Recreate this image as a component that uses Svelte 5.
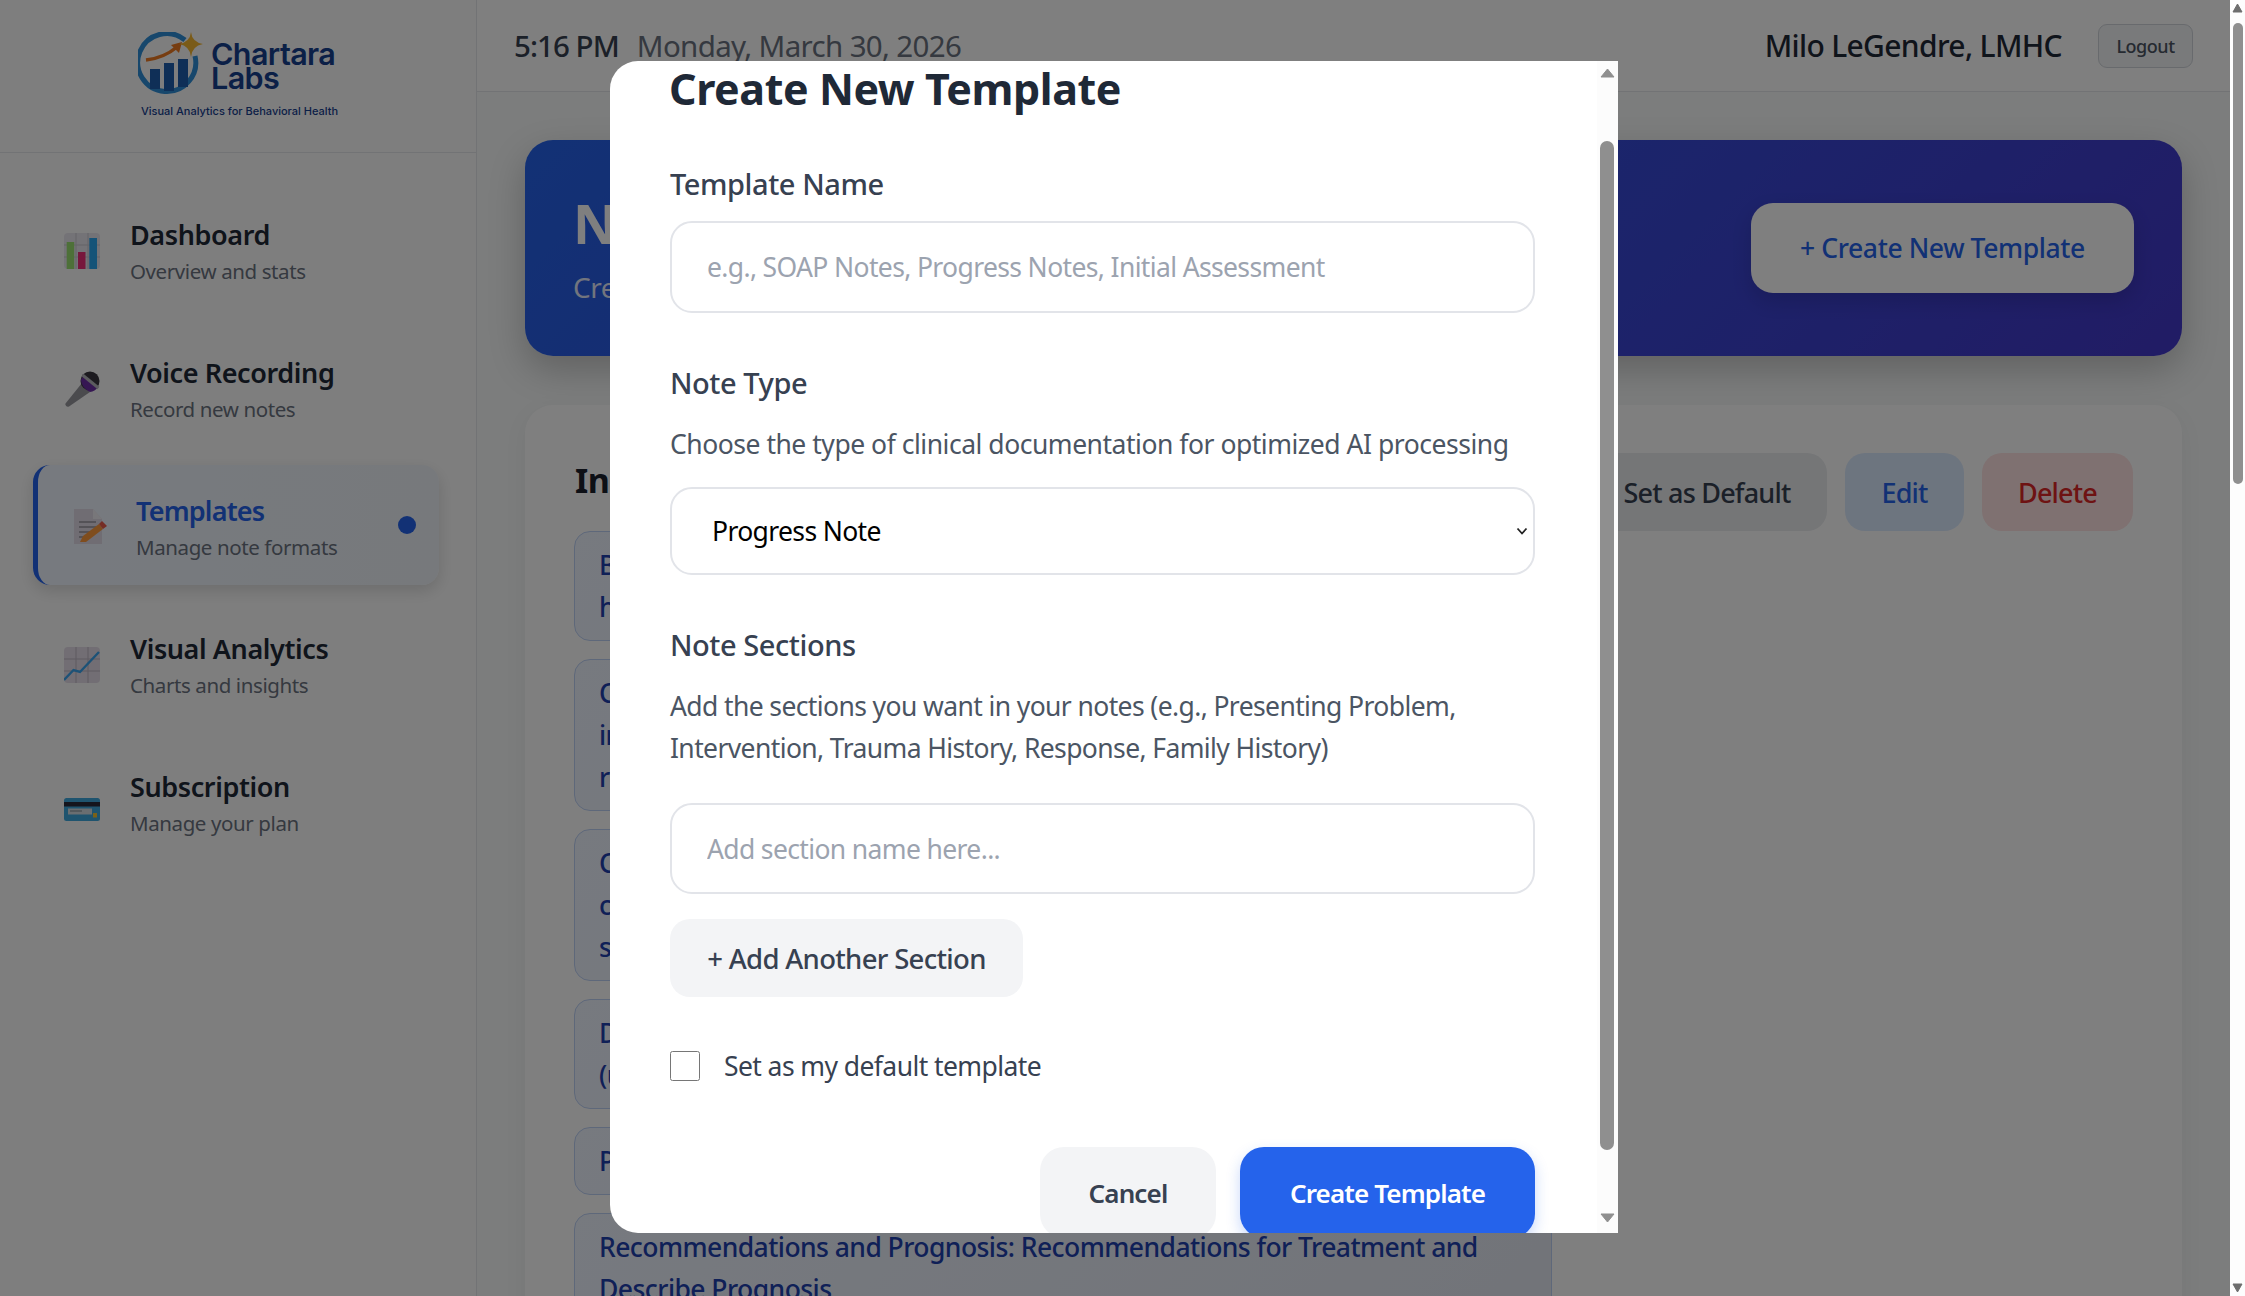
<script>
	const navItems = [
		{ id: 'dashboard', title: 'Dashboard', sub: 'Overview and stats' },
		{ id: 'voice', title: 'Voice Recording', sub: 'Record new notes' },
		{ id: 'templates', title: 'Templates', sub: 'Manage note formats', active: true },
		{ id: 'analytics', title: 'Visual Analytics', sub: 'Charts and insights' },
		{ id: 'subscription', title: 'Subscription', sub: 'Manage your plan' }
	];

	const sections = [
		['Brief summary of session', 'highlights and presenting concerns'],
		['Clinical observations and', 'interventions used during the', 'recent session with the client'],
		['Client response to treatment and', 'current progress on goals and', 'symptoms reported this week'],
		['Diagnosis and treatment plan', '(updated as clinically indicated)'],
		['Plan for next session'],
		['Recommendations and Prognosis: Recommendations for Treatment and', 'Describe Prognosis']
	];
</script>

<div class="page">
	<div class="app">
		<aside class="sidebar">
			<div class="brand">
				<div class="logo">
					<svg class="logo-mark" viewBox="0 0 72 66" width="72" height="66">
						<path d="M47 8 A29 29 0 1 0 57 24" fill="none" stroke="#2f8fd8" stroke-width="5" />
						<rect x="12" y="37" width="10" height="20" fill="#1f5fae" />
						<rect x="26" y="31" width="10" height="28" fill="#1f5fae" />
						<rect x="40" y="27" width="10" height="28" fill="#1f5fae" />
						<path d="M8 28 Q26 26 39 15" fill="none" stroke="#ef7a22" stroke-width="3.5" />
						<path d="M33 13 L44 10 L41 21 Z" fill="#ef7a22" />
						<path d="M53 0 Q54 10 65 12 Q54 14 53 25 Q52 14 41 12 Q52 10 53 0 Z" fill="#f5b731" />
					</svg>
					<div class="logo-name">Chartara<br />Labs</div>
				</div>
				<div class="logo-tag">Visual Analytics for Behavioral Health</div>
			</div>
			<nav class="nav">
				{#each navItems as item}
					<div class="nav-item" class:active={item.active}>
						<span class="nav-icon">
							{#if item.id === 'dashboard'}
								<svg viewBox="0 0 36 36" width="36" height="36">
									<rect width="36" height="36" rx="4" fill="#e9e6ee" />
									<path d="M12 0V36M24 0V36M0 12H36M0 24H36" stroke="#c9c8d0" stroke-width="1" />
									<rect x="2.7" y="9" width="7.5" height="27" fill="#9be070" />
									<rect x="14" y="19" width="7.5" height="17" fill="#ee2f78" />
									<rect x="25.3" y="5" width="7.7" height="31" fill="#2aa6f0" />
								</svg>
							{:else if item.id === 'voice'}
								<svg viewBox="0 0 36 36" width="36" height="36">
									<path d="M1.5 32.5 L18 12 L26 21 L5 35.5 Q1 36.5 1.5 32.5 Z" fill="#96969c" />
									<circle cx="26" cy="10" r="9.5" fill="#3a3640" />
									<path d="M16.8 9 Q18 17 26 21 Q31 20.5 34 16 L20 4 Z" fill="#6c2fa6" />
									<path d="M18.5 4 L34.5 17" stroke="#b8b8be" stroke-width="3" />
								</svg>
							{:else if item.id === 'templates'}
								<svg class="doc" viewBox="0 0 36 36" width="36" height="36">
									<path d="M2 0H21L30 10V35H2Z" fill="#e0dbe6" />
									<path d="M21 0L30 10H21Z" fill="#f1eef4" />
									<path d="M7 13H24M7 18H24M7 23H20M7 28H14" stroke="#97949c" stroke-width="1.5" />
									<path d="M8 33 L11 27 L27 15 L31 20 L14 33 Z" fill="#ff9a3c" />
									<path d="M27 15 L30 12 L35 17 L31 20 Z" fill="#ea5a4a" />
								</svg>
							{:else if item.id === 'analytics'}
								<svg viewBox="0 0 36 36" width="36" height="36">
									<rect width="36" height="36" rx="4" fill="#e4dde8" />
									<path d="M12 0V36M24 0V36M0 12H36M0 24H36" stroke="#bcb4c2" stroke-width="1" />
									<polyline points="0,33 9.5,23 16,25 35,5" fill="none" stroke="#3aa4ef" stroke-width="2.4" />
								</svg>
							{:else}
								<svg class="card-icon" viewBox="0 0 36 23" width="36" height="23">
									<rect width="36" height="23" rx="2.5" fill="#3fa9df" />
									<rect y="4" width="36" height="4.5" fill="#2b2b3a" />
									<rect x="4" y="10.5" width="24" height="6" fill="#d4dde2" />
									<path d="M6 13H18" stroke="#97a0a6" stroke-width="1.4" />
									<rect x="29" y="15" width="4" height="4.5" fill="#f3c232" />
								</svg>
							{/if}
						</span>
						<span class="nav-text">
							<span class="nav-title">{item.title}</span>
							<span class="nav-sub">{item.sub}</span>
						</span>
						{#if item.active}<span class="nav-dot"></span>{/if}
					</div>
				{/each}
			</nav>
		</aside>

		<div class="main">
			<header class="topbar">
				<div class="clock">
					<span class="time">5:16 PM</span>
					<span class="date">Monday, March 30, 2026</span>
				</div>
				<div class="user">
					<span class="user-name">Milo LeGendre, LMHC</span>
					<button class="logout" type="button">Logout</button>
				</div>
			</header>

			<div class="content">
				<section class="banner">
					<div>
						<h1>Note Templates</h1>
						<p>Create and manage your note formats</p>
					</div>
					<button class="banner-btn" type="button">+ Create New Template</button>
				</section>

				<section class="card">
					<div class="card-head">
						<h2>Individual Therapy Progress Note</h2>
						<div class="card-actions">
							<button class="act act-default" type="button">Set as Default</button>
							<button class="act act-edit" type="button">Edit</button>
							<button class="act act-delete" type="button">Delete</button>
						</div>
					</div>
					<div class="chips">
						{#each sections as lines}
							<div class="chip">
								{#each lines as line}<div>{line}</div>{/each}
							</div>
						{/each}
					</div>
				</section>
			</div>
		</div>

		<div class="overlay">
			<div class="modal">
				<div class="modal-body">
					<h2 class="modal-title">Create New Template</h2>

					<div class="label first">Template Name</div>
					<input class="field" type="text" placeholder="e.g., SOAP Notes, Progress Notes, Initial Assessment" />

					<div class="label">Note Type</div>
					<p class="help">Choose the type of clinical documentation for optimized AI processing</p>
					<div class="select-wrap">
						<select class="field select">
							<option>Progress Note</option>
						</select>
						<svg class="chevron" viewBox="0 0 12 8" width="12" height="8">
							<polyline points="1.5,1.5 6,6.5 10.5,1.5" fill="none" stroke="#222" stroke-width="1.8" />
						</svg>
					</div>

					<div class="label">Note Sections</div>
					<p class="help help-sections">
						Add the sections you want in your notes (e.g., Presenting Problem,<br />
						Intervention, Trauma History, Response, Family History)
					</p>
					<input class="field field-section" type="text" placeholder="Add section name here..." />
					<button class="add-btn" type="button">+ Add Another Section</button>

					<label class="check">
						<input type="checkbox" />
						<span>Set as my default template</span>
					</label>

					<div class="modal-actions">
						<button class="cancel" type="button">Cancel</button>
						<button class="create" type="button">Create Template</button>
					</div>
				</div>
				<div class="modal-scroll">
					<svg class="arrow" viewBox="0 0 15 10" width="15" height="10"><path d="M7.5 1 L14 9 H1 Z" fill="#8f8f8f" stroke="#8f8f8f" stroke-linejoin="round" /></svg>
					<div class="modal-track"><div class="modal-thumb"></div></div>
					<svg class="arrow" viewBox="0 0 15 10" width="15" height="10"><path d="M7.5 9 L14 1 H1 Z" fill="#8f8f8f" stroke="#8f8f8f" stroke-linejoin="round" /></svg>
				</div>
			</div>
		</div>
	</div>

	<div class="page-scroll">
		<svg viewBox="0 0 11 10" width="11" height="10"><path d="M5.5 1 L10 9 H1 Z" fill="#6e6e6e" stroke="#6e6e6e" stroke-linejoin="round" /></svg>
		<div class="page-track"><div class="page-thumb"></div></div>
		<svg viewBox="0 0 11 10" width="11" height="10"><path d="M5.5 9 L10 1 H1 Z" fill="#6e6e6e" stroke="#6e6e6e" stroke-linejoin="round" /></svg>
	</div>
</div>

<style>
	:global(body) {
		margin: 0;
		background: #fff;
	}

	.page {
		display: flex;
		height: 1296px;
		overflow: hidden;
		font-family: 'Noto Sans', 'Open Sans', sans-serif;
		letter-spacing: -0.03em;
		color: #1f2937;
	}

	.app {
		position: relative;
		flex: 1;
		display: flex;
		min-width: 0;
	}

	/* sidebar */
	.sidebar {
		width: 477px;
		flex-shrink: 0;
		box-sizing: border-box;
		background: #fdfdfd;
		border-right: 1px solid #e5e7eb;
	}

	.brand {
		height: 153px;
		box-sizing: border-box;
		padding: 32px 0 0 138px;
		border-bottom: 1px solid #e5e7eb;
	}

	.logo {
		display: flex;
		align-items: flex-start;
		gap: 1px;
		height: 66px;
	}

	.logo-mark {
		flex-shrink: 0;
	}

	.logo-name {
		font-family: 'Inter', 'Liberation Sans', sans-serif;
		font-size: 30.5px;
		line-height: 24px;
		font-weight: 600;
		letter-spacing: -0.02em;
		color: #17408f;
		margin-top: 10px;
	}

	.logo-tag {
		font-family: 'Inter', 'Liberation Sans', sans-serif;
		font-size: 11px;
		font-weight: 500;
		letter-spacing: 0;
		color: #17408f;
		margin: 6px 0 0 3px;
		white-space: nowrap;
	}

	.nav {
		padding: 36px 29px 0 28px;
		display: flex;
		flex-direction: column;
		gap: 18px;
	}

	.nav-item {
		display: flex;
		align-items: center;
		height: 120px;
		box-sizing: border-box;
		padding: 4px 0 0 36px;
		border-radius: 17px;
	}

	.nav-item.active {
		margin: 0 8px 0 5px;
		padding-left: 34px;
		background: linear-gradient(90deg, #eef5ff, #eff3f8);
		border-left: 5px solid #2563eb;
		box-shadow: 0 6px 16px rgba(0, 0, 0, 0.14);
	}

	.nav-icon {
		width: 36px;
		height: 36px;
		flex-shrink: 0;
		display: flex;
		align-items: center;
		margin-right: 30px;
	}

	.active .nav-icon {
		margin-right: 28px;
	}

	.card-icon {
		margin-top: 13px;
	}

	.nav-text {
		display: flex;
		flex-direction: column;
		flex: 1;
		margin-top: 2px;
		letter-spacing: -0.025em;
	}

	.nav-title {
		font-size: 27px;
		line-height: 37px;
		font-weight: 600;
		color: #1f2937;
	}

	.active .nav-title {
		color: #2563eb;
		letter-spacing: -0.03em;
	}

	.nav-sub {
		font-size: 20.5px;
		line-height: 36px;
		color: #6b7280;
	}

	.nav-dot {
		width: 18px;
		height: 18px;
		border-radius: 50%;
		background: #2563eb;
		margin: -4px 23px 0 0;
	}

	/* main column */
	.main {
		flex: 1;
		min-width: 0;
		background: #f8fafa;
		display: flex;
		flex-direction: column;
	}

	.topbar {
		height: 92px;
		flex-shrink: 0;
		box-sizing: border-box;
		display: flex;
		align-items: center;
		justify-content: space-between;
		padding: 0 37px;
		background: #fff;
		border-bottom: 1px solid #e5e7eb;
	}

	.clock {
		display: flex;
		gap: 18px;
		align-items: baseline;
		font-size: 29.5px;
		letter-spacing: -0.032em;
	}

	.time {
		font-weight: 500;
		color: #374151;
	}

	.date {
		color: #6b7280;
		letter-spacing: -0.022em;
	}

	.user {
		display: flex;
		align-items: center;
		gap: 36px;
	}

	.user-name {
		font-size: 30px;
		font-weight: 500;
		letter-spacing: -0.022em;
		color: #1f2937;
	}

	.logout {
		font: inherit;
		letter-spacing: -0.025em;
		font-size: 18px;
		font-weight: 500;
		color: #4b5563;
		width: 95px;
		height: 44px;
		background: #f3f4f6;
		border: 1.5px solid #d1d5db;
		border-radius: 9px;
	}

	.content {
		padding: 48px 48px 0;
	}

	.banner {
		height: 216px;
		box-sizing: border-box;
		padding: 0 48px;
		display: flex;
		align-items: center;
		justify-content: space-between;
		border-radius: 28px;
		background: linear-gradient(135deg, #2563eb, #4338ca);
		box-shadow: 0 14px 36px rgba(0, 0, 0, 0.22);
		color: #fff;
		margin-bottom: 49px;
	}

	.banner h1 {
		margin: 0 0 12px;
		font-size: 54px;
		line-height: 66px;
		font-weight: 700;
	}

	.banner p {
		margin: 0;
		font-size: 28px;
		line-height: 38px;
		color: rgba(255, 255, 255, 0.88);
	}

	.banner-btn {
		font: inherit;
		letter-spacing: -0.015em;
		width: 383px;
		height: 90px;
		font-size: 26.5px;
		font-weight: 500;
		color: #2563eb;
		background: #fff;
		border: none;
		border-radius: 22px;
		box-shadow: 0 8px 20px rgba(0, 0, 0, 0.14);
	}

	.card {
		background: #fff;
		border-radius: 28px;
		padding: 48px 49px;
		box-shadow: 0 6px 24px rgba(0, 0, 0, 0.05);
		height: 1000px;
	}

	.card-head {
		display: flex;
		align-items: center;
		justify-content: space-between;
		height: 78px;
	}

	.card-head h2 {
		margin: -24px 0 0 1px;
		font-size: 34px;
		font-weight: 700;
		color: #1a202c;
		white-space: nowrap;
	}

	.card-actions {
		display: flex;
		gap: 18px;
	}

	.act {
		font: inherit;
		letter-spacing: -0.03em;
		font-size: 27px;
		font-weight: 500;
		height: 78px;
		border: none;
		border-radius: 20px;
		padding: 0;
	}

	.act-default {
		background: #eaecef;
		color: #374151;
		width: 240px;
	}

	.act-edit {
		background: #dbeafe;
		color: #2563eb;
		width: 119px;
	}

	.act-delete {
		background: #fee2e2;
		color: #dc2626;
		width: 151px;
	}

	.chips {
		width: 978px;
		display: flex;
		flex-direction: column;
		gap: 18px;
	}

	.chip {
		box-sizing: border-box;
		padding: 12px 24px;
		border: 1.5px solid #bcd0f5;
		border-radius: 16px;
		background: linear-gradient(135deg, #eef4ff, #e4e8f2);
		font-size: 26.5px;
		line-height: 42px;
		font-weight: 500;
		letter-spacing: -0.021em;
		color: #1e40af;
		white-space: nowrap;
	}

	/* modal */
	.overlay {
		position: absolute;
		inset: 0;
		background: rgba(0, 0, 0, 0.5);
		display: flex;
		align-items: flex-start;
		padding: 61px 0 0 610px;
		box-sizing: border-box;
	}

	.modal {
		width: 1008px;
		height: 1172px;
		display: flex;
		background: #fff;
		border-radius: 28px 0 0 28px;
		overflow: hidden;
	}

	.modal-body {
		flex: 1;
		min-width: 0;
		padding: 0 62px 0 60px;
		overflow: hidden;
	}

	.modal-title {
		margin: 0 0 0 -1px;
		font-size: 43px;
		line-height: 56px;
		font-weight: 700;
		letter-spacing: -0.01em;
		color: #1f2937;
	}

	.label {
		margin-top: 51px;
		padding-bottom: 1px;
		font-size: 29px;
		line-height: 38px;
		font-weight: 500;
		letter-spacing: -0.015em;
		color: #374151;
	}

	.label.first {
		margin-top: 48px;
	}

	.field {
		display: block;
		width: 100%;
		height: 92px;
		box-sizing: border-box;
		margin-top: 17px;
		padding: 0 35px;
		font: inherit;
		letter-spacing: -0.024em;
		font-size: 26.5px;
		color: #000;
		background: #fff;
		border: 2px solid #e2e4e9;
		border-radius: 22px;
	}

	.field::placeholder {
		color: #9ca3af;
		opacity: 1;
	}

	.select-wrap {
		position: relative;
		margin-top: 22px;
	}

	.select {
		appearance: none;
		height: 88px;
		margin-top: 0;
		padding: 0 40px;
	}

	.chevron {
		position: absolute;
		right: 7px;
		top: 40px;
	}

	.field-section {
		height: 91px;
		margin-top: 34px;
	}

	.help {
		margin: 20px 0 0;
		font-size: 26.5px;
		line-height: 42px;
		letter-spacing: -0.018em;
		color: #4b5563;
		white-space: nowrap;
	}

	.help-sections {
		letter-spacing: -0.023em;
	}

	.add-btn {
		display: block;
		margin-top: 25px;
		width: 353px;
		height: 78px;
		font: inherit;
		letter-spacing: -0.025em;
		font-size: 27.5px;
		font-weight: 500;
		color: #374151;
		background: #f3f4f6;
		border: none;
		border-radius: 20px;
	}

	.check {
		display: flex;
		align-items: center;
		gap: 24px;
		margin-top: 54px;
		height: 30px;
		font-size: 26.5px;
		letter-spacing: -0.022em;
		color: #374151;
	}

	.check input {
		width: 30px;
		height: 30px;
		margin: 0;
	}

	.modal-actions {
		display: flex;
		justify-content: flex-end;
		gap: 24px;
		margin-top: 66px;
	}

	.modal-actions button {
		font: inherit;
		letter-spacing: -0.033em;
		font-size: 26px;
		font-weight: 600;
		height: 91px;
		border: none;
		border-radius: 24px;
	}

	.cancel {
		width: 176px;
		color: #374151;
		background: #f3f4f6;
	}

	.create {
		width: 295px;
		color: #fff;
		background: #2563eb;
		box-shadow: 0 6px 14px rgba(37, 99, 235, 0.25);
	}

	.modal-scroll {
		width: 21px;
		flex-shrink: 0;
		background: #fcfcfc;
		display: flex;
		flex-direction: column;
		align-items: center;
		padding: 7px 0 10px;
		box-sizing: border-box;
	}

	.arrow {
		flex-shrink: 0;
		margin-left: -1px;
	}

	.modal-track {
		flex: 1;
		padding-top: 63px;
	}

	.modal-thumb {
		width: 14px;
		height: 1009px;
		border-radius: 7px;
		background: #8f8f8f;
		margin-left: -1px;
	}

	/* window scrollbar, not dimmed */
	.page-scroll {
		width: 15px;
		flex-shrink: 0;
		background: #fdfdfd;
		display: flex;
		flex-direction: column;
		align-items: center;
		padding: 3px 0;
		box-sizing: border-box;
	}

	.page-track {
		flex: 1;
		padding-top: 10px;
	}

	.page-thumb {
		width: 10px;
		height: 461px;
		border-radius: 5px;
		background: #8f8f8f;
	}
</style>
